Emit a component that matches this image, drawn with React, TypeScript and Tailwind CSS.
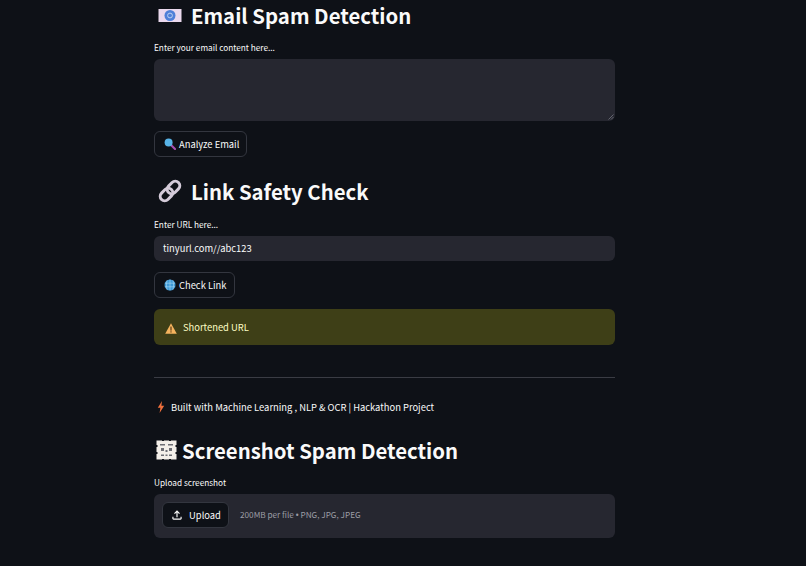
import React from 'react';

const font = "[font-family:'Noto_Sans_CJK_SC','Liberation_Sans',sans-serif]";

const EnvelopeIcon = () => (
  <svg width="24" height="16" viewBox="0 0 24 16" className="shrink-0">
    <rect x="0.5" y="2" width="23" height="13" fill="#ead9ee" />
    <circle cx="12" cy="8.5" r="5.5" fill="#4f80d8" />
    <circle cx="12" cy="8.5" r="2.4" fill="none" stroke="#bcd0f2" strokeWidth="1" />
  </svg>
);

const SearchIcon = () => (
  <svg width="12" height="12" viewBox="0 0 12 12" className="shrink-0">
    <path d="M7 7l4 4" stroke="#a64fb0" strokeWidth="2.2" strokeLinecap="round" />
    <circle cx="4.6" cy="4.6" r="4" fill="#58b4e8" />
  </svg>
);

const LinkIcon = () => (
  <svg width="24" height="24" viewBox="0 0 24 24" fill="none" className="shrink-0">
    <g stroke="#d4cbd9" strokeWidth="3">
      <rect x="1.5" y="11" width="14" height="9" rx="4.5" transform="rotate(-45 8.5 15.5)" />
      <rect x="8.5" y="4" width="14" height="9" rx="4.5" transform="rotate(-45 15.5 8.5)" />
    </g>
  </svg>
);

const GlobeIcon = () => (
  <svg width="12" height="12" viewBox="0 0 12 12" fill="none" className="shrink-0">
    <circle cx="6" cy="6" r="5.5" fill="#3f9bd8" />
    <path d="M0.8 4.2h10.4M0.8 7.8h10.4M6 .5v11M3.2 1.2c-1 3-1 6.6 0 9.6M8.8 1.2c1 3 1 6.6 0 9.6" stroke="#a9d6f2" strokeWidth="0.6" />
  </svg>
);

const WarningIcon = () => (
  <svg width="12" height="11" viewBox="0 0 12 11" className="shrink-0 mt-[2px]">
    <path d="M6 0.3L11.8 10.7H0.2z" fill="#f4b35e" />
    <rect x="5.4" y="3.6" width="1.2" height="4" fill="#5a3b14" />
    <rect x="5.4" y="8.3" width="1.2" height="1.2" fill="#5a3b14" />
  </svg>
);

const BoltIcon = () => (
  <svg width="8" height="12" viewBox="0 0 8 12" className="shrink-0">
    <path d="M5 0L0.8 6.8h2.6L2.6 12l4.6-7.2H4.4z" fill="#f0703c" />
  </svg>
);

const FrameIcon = () => (
  <svg width="21" height="20" viewBox="0 0 21 20" className="shrink-0">
    <rect x="0.5" y="0.5" width="20" height="19" fill="#f3efe9" />
    <path d="M4 4h5v1.5H4zM12 4h5v1.5h-5zM5 8h3v3H5zM13 8h3v3h-3zM9.5 10h2v2h-2zM5 14.5h3V16H5zM9.5 14.5h2V16h-2zM13 14.5h3V16h-3z" fill="#6d6e74" />
    <path d="M0 5h1.5v2H0zM0 12h1.5v2H0zM19.5 5H21v2h-1.5zM19.5 12H21v2h-1.5zM6 0h2v1H6zM13 0h2v1h-2zM6 19h2v1H6zM13 19h2v1h-2z" fill="#0e1117" />
  </svg>
);

const UploadIcon = () => (
  <svg width="14" height="14" viewBox="0 0 24 24" fill="currentColor" className="shrink-0">
    <path d="M18 15v3H6v-3H4v3c0 1.1.9 2 2 2h12c1.1 0 2-.9 2-2v-3h-2zM7 9l1.41 1.41L11 7.83V16h2V7.83l2.59 2.58L17 9l-5-5-5 5z" />
  </svg>
);

const Heading = ({ icon, title, className }: { icon: React.ReactNode; title: string; className: string }) => (
  <h2 className={`flex items-center font-semibold text-[#fafafa] text-[20.35px] leading-[32px] ${className}`}>
    {icon}
    {title}
  </h2>
);

const Button = ({ icon, label }: { icon: React.ReactNode; label: string }) => (
  <button className="flex items-center gap-[3px] self-start h-[26px] pl-[9px] pr-[7px] rounded-[6px] border border-[#33363f] text-[#fafafa] text-[9.4px]">
    {icon}
    {label}
  </button>
);

const Label = ({ text }: { text: string }) => (
  <p className="text-[#fafafa] text-[8.25px] leading-[12px]">{text}</p>
);

export default function App() {
  return (
    <div className={`h-[566px] overflow-hidden bg-[#0e1117] ${font}`}>
      <main className="w-[461px] ml-[154px] flex flex-col -mt-[1px]">
        <Heading icon={<EnvelopeIcon />} title="Email Spam Detection" className="pl-[4px] gap-[9px]" />
        <div className="mt-[10px]">
          <Label text="Enter your email content here..." />
        </div>
        <div className="relative mt-[6px] h-[62px] rounded-[6px] bg-[#262730]">
          <svg width="6" height="6" viewBox="0 0 6 6" className="absolute right-[1px] bottom-[1px]">
            <path d="M5.5 0.5L0.5 5.5M5.5 3L3 5.5" stroke="#62646e" strokeWidth="1" />
          </svg>
        </div>
        <div className="mt-[10px] flex flex-col">
          <Button icon={<SearchIcon />} label="Analyze Email" />
        </div>
        <Heading icon={<LinkIcon />} title="Link Safety Check" className="mt-[18px] pl-[4px] gap-[9px]" />
        <div className="mt-[11px]">
          <Label text="Enter URL here..." />
        </div>
        <div className="mt-[6px] flex items-center h-[25px] px-[9px] rounded-[6px] bg-[#262730] text-[#fafafa] text-[9.4px]">
          tinyurl.com//abc123
        </div>
        <div className="mt-[11px] flex flex-col">
          <Button icon={<GlobeIcon />} label="Check Link" />
        </div>
        <div className="mt-[11px] flex items-center gap-[6px] h-[36px] pl-[11px] rounded-[6px] bg-[#3e3f17] text-[#fdfdc5] text-[9.4px]">
          <WarningIcon />
          Shortened URL
        </div>
        <hr className="mt-[32px] border-[#3a3c44]" />
        <div className="mt-[22px] flex items-center gap-[6px] pl-[3px] text-[#fafafa] text-[9.4px] leading-[14px]">
          <BoltIcon />
          Built with Machine Learning , NLP &amp; OCR | Hackathon Project
        </div>
        <Heading icon={<FrameIcon />} title="Screenshot Spam Detection" className="mt-[20px] pl-[2px] gap-[5px]" />
        <div className="mt-[10px]">
          <Label text="Upload screenshot" />
        </div>
        <div className="mt-[6px] flex items-center h-[44px] pl-[8px] pb-[2px] rounded-[6px] bg-[#262730]">
          <button className="flex items-center gap-[5px] h-[26px] w-[67px] justify-center rounded-[6px] border border-[#33363f] bg-[#0e1117] text-[#fafafa] text-[9.4px]">
            <UploadIcon />
            Upload
          </button>
          <span className="ml-[11px] text-[#9b9ca4] text-[8.2px]">
            200MB per file <span className="[font-family:'Liberation_Sans',sans-serif]">•</span> PNG, JPG, JPEG
          </span>
        </div>
      </main>
    </div>
  );
}
